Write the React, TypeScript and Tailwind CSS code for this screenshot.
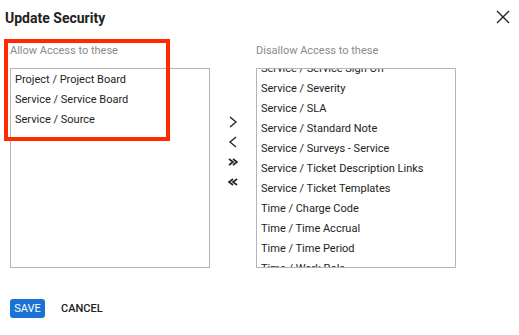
import React, { useEffect, useRef } from "react";

const allow = ["Project / Project Board", "Service / Service Board", "Service / Source"];
const disallow = [
  "Service / Service Sign Off",
  "Service / Severity",
  "Service / SLA",
  "Service / Standard Note",
  "Service / Surveys - Service",
  "Service / Ticket Description Links",
  "Service / Ticket Templates",
  "Time / Charge Code",
  "Time / Time Accrual",
  "Time / Time Period",
  "Time / Work Role",
  "Time / Work Type",
];

function Chevron({ dir }: { dir: "r" | "l" | "rr" | "ll" }) {
  const single = dir === "r" || dir === "l";
  const flip = dir === "l" || dir === "ll";
  return (
    <svg width="12" height="12" viewBox="0 0 12 12" className={flip ? "-scale-x-100" : ""}>
      {single ? (
        <path d="M3 1 L9 6 L3 11" fill="none" stroke="#222" strokeWidth="1.3" />
      ) : (
        <>
          <path d="M2 3 L6 6 L2 9" fill="none" stroke="#222" strokeWidth="1.6" />
          <path d="M6 3 L10 6 L6 9" fill="none" stroke="#222" strokeWidth="1.6" />
        </>
      )}
    </svg>
  );
}

export default function App() {
  const ref = useRef<HTMLDivElement>(null);
  useEffect(() => {
    if (ref.current) ref.current.scrollTop = 11;
  }, []);
  return (
    <div
      className="relative w-[519px] h-[335px] bg-white text-[#222]"
      style={{ fontFamily: "Roboto, 'Liberation Sans', sans-serif" }}
    >
      <div className="flex items-center justify-between pl-[5px] pr-[9px] pt-[7px] h-[28px]">
        <div className="text-[14px] font-bold leading-none">Update Security</div>
        <svg width="14" height="14" viewBox="0 0 14 14" className="mt-[-1px]">
          <path d="M1 1 L13 13 M13 1 L1 13" stroke="#222" strokeWidth="1.4" />
        </svg>
      </div>
      <div className="flex pl-[10px] pt-[16px]">
        <div className="flex flex-col">
          <div className="text-[11px] text-[#8a8a8a] leading-[13px] h-[24px]">Allow Access to these</div>
          <div className="w-[200px] h-[200px] border border-[#b5b5b5] pt-px pl-[4px] text-[11px]">
            {allow.map((a) => (
              <div key={a} className="h-[20px] leading-[20px]">{a}</div>
            ))}
          </div>
        </div>
        <div className="w-[46px] flex flex-col items-center pt-[72px] gap-[8px]">
          <Chevron dir="r" />
          <Chevron dir="l" />
          <Chevron dir="rr" />
          <Chevron dir="ll" />
        </div>
        <div className="flex flex-col">
          <div className="text-[11px] text-[#8a8a8a] leading-[13px] h-[24px]">Disallow Access to these</div>
          <div
            ref={ref}
            className="w-[200px] h-[200px] border border-[#b5b5b5] pt-px pl-[4px] text-[11px] overflow-hidden"
          >
            {disallow.map((a) => (
              <div key={a} className="h-[20px] leading-[20px] whitespace-nowrap">{a}</div>
            ))}
          </div>
        </div>
      </div>
      <div className="flex items-center pl-[10px] pt-[31px] gap-[16px]">
        <button className="h-[19px] w-[35px] rounded-[3px] bg-[#1a73d4] text-white text-[11px] leading-none">
          SAVE
        </button>
        <button className="text-[11px] leading-none font-medium text-[#222]">CANCEL</button>
      </div>
      <div className="absolute left-[4px] top-[39px] w-[166px] h-[102px] border-[4px] border-[#ff2a00] pointer-events-none" />
    </div>
  );
}
